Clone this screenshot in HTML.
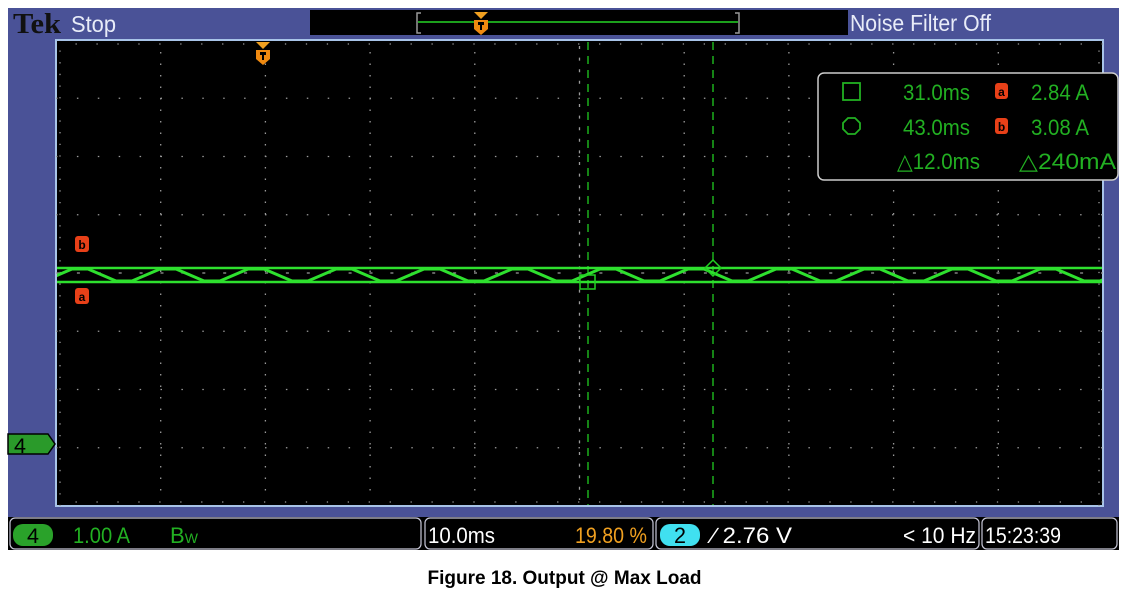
<!DOCTYPE html>
<html><head><meta charset="utf-8"><style>
body{margin:0;background:#fff;width:1129px;height:602px;overflow:hidden;font-family:"Liberation Sans",sans-serif}
svg{position:absolute;left:0;top:0}
.cap{position:absolute;left:0;width:1129px;top:568px;text-align:center;font-weight:bold;font-size:19px;color:#000}
</style></head><body>
<svg width="1129" height="602" viewBox="0 0 1129 602" xmlns="http://www.w3.org/2000/svg" font-family="Liberation Sans, sans-serif">
<defs>
<pattern id="tri" patternUnits="userSpaceOnUse" x="36" y="265" width="88" height="20">
<path d="M0 16 L8 16 L36 4 L52 4 L80 16 L88 16" fill="none" stroke="#2ee02e" stroke-width="3"/>
</pattern>
</defs>
<rect x="8" y="8" width="1111" height="510" fill="#4a5297"/>
<text x="13" y="33" font-family="Liberation Serif, serif" font-weight="bold" font-size="28" fill="#111" textLength="48" lengthAdjust="spacingAndGlyphs">Tek</text>
<text x="71" y="32" font-size="23" fill="#e8ecf8" textLength="45" lengthAdjust="spacingAndGlyphs">Stop</text>
<rect x="310" y="10" width="538" height="25" fill="#000"/>
<path d="M421 13 h-4 v20 h4 M735 13 h4 v20 h-4" stroke="#999" stroke-width="1.5" fill="none"/>
<line x1="418" y1="22" x2="738" y2="22" stroke="#1ca01c" stroke-width="2"/>
<path d="M474 12 h14 l-7 7z" fill="#f0a020"/>
<path d="M474 20 h14 v9 l-7 6 l-7 -6z" fill="#f08a10"/><path d="M478 22 h6 v3 h-2 v5 h-2 v-5 h-2z" fill="#000"/>
<text x="850" y="31" font-size="23" fill="#e8ecf8" textLength="141" lengthAdjust="spacingAndGlyphs">Noise Filter Off</text>
<rect x="56" y="40" width="1047" height="466" fill="#000" stroke="#a8c4e8" stroke-width="2"/>
<g stroke="#9a9a9a" stroke-width="1.3" stroke-dasharray="1.5 10">
<line x1="160.7" y1="52" x2="160.7" y2="500"/><line x1="265.4" y1="52" x2="265.4" y2="500"/><line x1="370.1" y1="52" x2="370.1" y2="500"/><line x1="474.8" y1="52" x2="474.8" y2="500"/><line x1="579.5" y1="46" x2="579.5" y2="500" stroke-dasharray="3 8.6"/><line x1="684.2" y1="52" x2="684.2" y2="500"/><line x1="788.9" y1="52" x2="788.9" y2="500"/><line x1="893.6" y1="52" x2="893.6" y2="500"/><line x1="998.3" y1="52" x2="998.3" y2="500"/>
</g>
<g stroke="#9a9a9a" stroke-width="1.3" stroke-dasharray="1.5 19.4">
<line x1="56" y1="98.25" x2="1103" y2="98.25"/><line x1="56" y1="156.5" x2="1103" y2="156.5"/><line x1="56" y1="214.75" x2="1103" y2="214.75"/><line x1="56" y1="273" x2="1103" y2="273" stroke-dasharray="3 17.9"/><line x1="56" y1="331.25" x2="1103" y2="331.25"/><line x1="56" y1="389.5" x2="1103" y2="389.5"/><line x1="56" y1="447.75" x2="1103" y2="447.75"/>
</g>
<g stroke="#9a9a9a" stroke-width="1.3">
<line x1="56" y1="44" x2="1103" y2="44" stroke-dasharray="1.3 19.64" stroke-dashoffset="-19.5"/>
<line x1="56" y1="502" x2="1103" y2="502" stroke-dasharray="1.3 19.64" stroke-dashoffset="-19.5"/>
<line x1="60" y1="40" x2="60" y2="506" stroke-dasharray="1.3 10.35" stroke-dashoffset="-10.5"/>
<line x1="1099" y1="40" x2="1099" y2="506" stroke-dasharray="1.3 10.35" stroke-dashoffset="-10.5"/>
</g>
<g stroke="#1cb01c" stroke-width="1.5" stroke-dasharray="8 6">
<line x1="588" y1="42" x2="588" y2="505"/><line x1="713" y1="42" x2="713" y2="505"/>
</g>
<path d="M256 42 h14 l-7 7z" fill="#f0a020"/>
<path d="M256 50 h14 v9 l-7 6 l-7 -6z" fill="#f08a10"/><path d="M260 52 h6 v3 h-2 v5 h-2 v-5 h-2z" fill="#000"/>
<line x1="57" y1="268" x2="1102" y2="268" stroke="#2ee02e" stroke-width="2.5"/>
<line x1="57" y1="282" x2="1102" y2="282" stroke="#2ee02e" stroke-width="2.5"/>
<rect x="57" y="265" width="1045" height="20" fill="url(#tri)"/>
<rect x="580" y="275" width="15" height="14" fill="none" stroke="#22d022" stroke-width="1.5"/>
<path d="M713 260 l8 8 l-8 8 l-8 -8z" fill="none" stroke="#22d022" stroke-width="1.5"/>
<rect x="75" y="236" width="14" height="16" rx="3" fill="#e84018"/><text x="82" y="249" font-size="12" font-weight="bold" text-anchor="middle" fill="#000">b</text>
<rect x="75" y="288" width="14" height="16" rx="3" fill="#e84018"/><text x="82" y="301" font-size="12" font-weight="bold" text-anchor="middle" fill="#000">a</text>
<rect x="818" y="73" width="300" height="107" rx="6" fill="#000" stroke="#ccc" stroke-width="1.5"/>
<rect x="843" y="83" width="17" height="17" fill="none" stroke="#22b022" stroke-width="1.8"/>
<path d="M848 118 h7 l5 5 v6 l-5 5 h-7 l-5 -5 v-6z" fill="none" stroke="#22b022" stroke-width="1.8"/>
<g font-size="22" fill="#22b022" lengthAdjust="spacingAndGlyphs">
<text x="903" y="100" textLength="67" lengthAdjust="spacingAndGlyphs">31.0ms</text>
<text x="903" y="135" textLength="67" lengthAdjust="spacingAndGlyphs">43.0ms</text>
<text x="897" y="169" textLength="83" lengthAdjust="spacingAndGlyphs">△12.0ms</text>
<text x="1031" y="100" textLength="58" lengthAdjust="spacingAndGlyphs">2.84 A</text>
<text x="1031" y="135" textLength="58" lengthAdjust="spacingAndGlyphs">3.08 A</text>
<text x="1019" y="169" textLength="97" lengthAdjust="spacingAndGlyphs">△240mA</text>
</g>
<rect x="995" y="83" width="13" height="16" rx="3" fill="#e84018"/><text x="1001.5" y="96" font-size="12" font-weight="bold" text-anchor="middle" fill="#000">a</text>
<rect x="995" y="118" width="13" height="16" rx="3" fill="#e84018"/><text x="1001.5" y="131" font-size="12" font-weight="bold" text-anchor="middle" fill="#000">b</text>
<path d="M8 434 h40 l7 10 l-7 10 h-40z" fill="#2a9a2a" stroke="#000" stroke-width="1.5"/>
<text x="14" y="453" font-size="21" fill="#000" textLength="12" lengthAdjust="spacingAndGlyphs">4</text>
<rect x="8" y="517" width="1111" height="33" fill="#000"/>
<g fill="none" stroke="#c8c8d8" stroke-width="1.2">
<rect x="10" y="518" width="411" height="31" rx="5"/>
<rect x="425" y="518" width="228" height="31" rx="5"/>
<rect x="656" y="518" width="323" height="31" rx="5"/>
<rect x="982" y="518" width="135" height="31" rx="5"/>
</g>
<rect x="13" y="524" width="40" height="22" rx="10" fill="#2aa22a"/>
<text x="27" y="543" font-size="21" fill="#000" textLength="12" lengthAdjust="spacingAndGlyphs">4</text>
<g font-size="22">
<text x="73" y="543" fill="#22b022" textLength="57" lengthAdjust="spacingAndGlyphs">1.00 A</text>
<text x="170" y="543" fill="#22b022">B<tspan font-size="14">W</tspan></text>
<text x="428" y="543" fill="#fff" textLength="67" lengthAdjust="spacingAndGlyphs">10.0ms</text>
<text x="575" y="543" fill="#f0a020" textLength="72" lengthAdjust="spacingAndGlyphs">19.80 %</text>
<rect x="660" y="524" width="40" height="22" rx="10" fill="#40e0f0"/>
<text x="674" y="543" fill="#000" textLength="12" lengthAdjust="spacingAndGlyphs">2</text>
<text x="712" y="543" fill="#fff" textLength="80" lengthAdjust="spacingAndGlyphs">∕ 2.76 V</text>
<text x="903" y="543" fill="#fff" textLength="73" lengthAdjust="spacingAndGlyphs">&lt; 10 Hz</text>
<text x="985" y="543" fill="#fff" textLength="76" lengthAdjust="spacingAndGlyphs">15:23:39</text>
</g>
</svg>
<div class="cap">Figure 18. Output @ Max Load</div>
</body></html>
